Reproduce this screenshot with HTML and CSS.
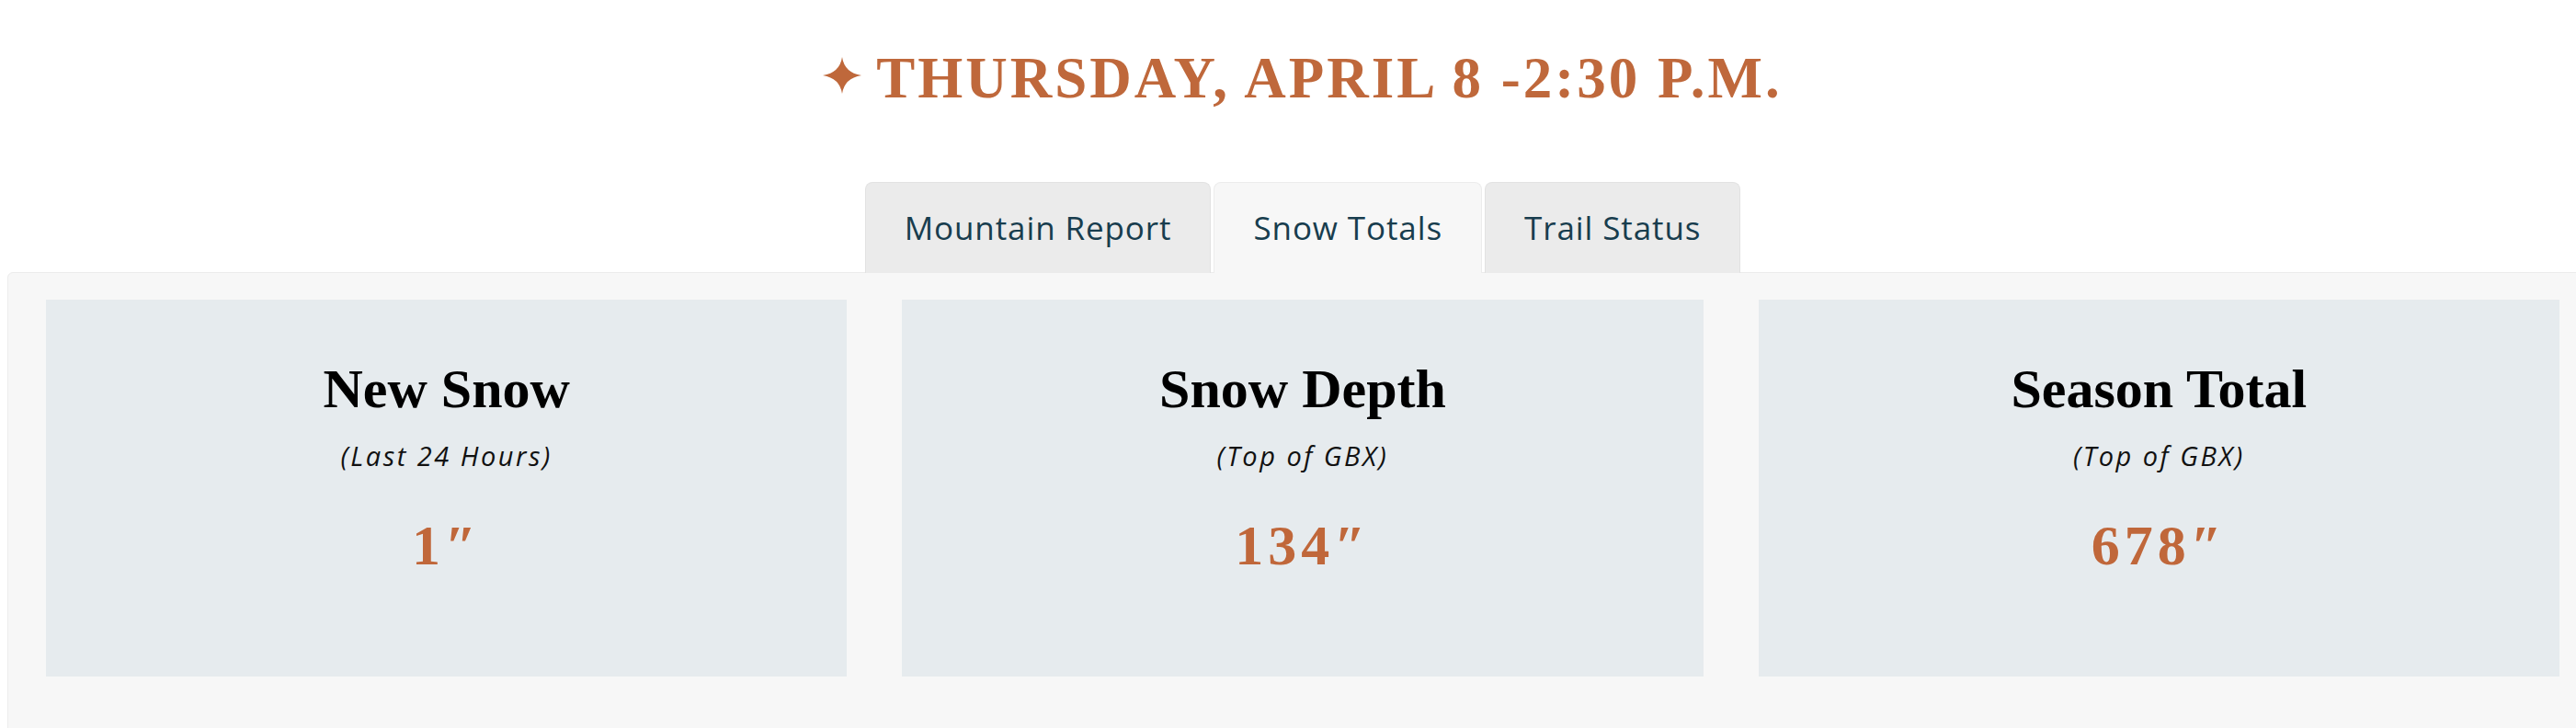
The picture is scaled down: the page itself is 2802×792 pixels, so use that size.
FILE: index.html
```html
<!DOCTYPE html>
<html lang="en">
  <head>
    <meta charset="UTF-8" />
    <title>Snow Report</title>
    <link rel="stylesheet" href="styles.css">
  </head>
  <body>
    <div class="report">
      <h1 class="report-date">
        <svg class="spark" width="42" height="40" viewBox="0 0 42 40" aria-hidden="true">
          <path d="M21 0 Q23.5 17 42 20 Q23.5 23 21 40 Q18.5 23 0 20 Q18.5 17 21 0 Z" fill="#bf683b" />
        </svg>
        <span>THURSDAY, APRIL 8 -2:30 P.M.</span>
      </h1>

      <div class="tabs">
        <div class="tab">Mountain Report</div>
        <div class="tab active">Snow Totals</div>
        <div class="tab">Trail Status</div>
      </div>

      <div class="panel">
        <div class="card">
          <h2>New Snow</h2>
          <p class="note">(Last 24 Hours)</p>
          <p class="amount">1″</p>
        </div>
        <div class="card">
          <h2>Snow Depth</h2>
          <p class="note">(Top of GBX)</p>
          <p class="amount">134″</p>
        </div>
        <div class="card">
          <h2>Season Total</h2>
          <p class="note">(Top of GBX)</p>
          <p class="amount">678″</p>
        </div>
      </div>
    </div>
  </body>
</html>
```

FILE: styles.css
```css
html,
body {
  margin: 0;
  overflow-x: hidden;
  background: #fff;
}

.report {
  width: 2818px;
  margin-left: 8px;
}

.report-date {
  display: flex;
  justify-content: center;
  align-items: center;
  gap: 16px;
  margin: 54px 0 82px;
  font-family: "Liberation Serif", serif;
  font-size: 63px;
  line-height: 62px;
  font-weight: bold;
  letter-spacing: 3px;
  color: #bf683b;
}

.spark {
  flex: none;
  margin-bottom: 6px;
}

.tabs {
  display: flex;
  justify-content: center;
  gap: 3px;
  margin-bottom: -1px;
}

.tab {
  position: relative;
  padding: 29px 42px;
  line-height: 40px;
  font-family: "Open Sans", sans-serif;
  font-size: 35px;
  letter-spacing: 0.9px;
  color: #183d4e;
  background: #ebebeb;
  border: 1px solid #e2e2e2;
  border-bottom: none;
  border-radius: 8px 8px 0 0;
}

.tab.active {
  background: #f7f7f7;
  border-color: #ececec;
  z-index: 1;
}

.panel {
  display: grid;
  grid-template-columns: repeat(3, 1fr);
  gap: 60px;
  padding: 29px 41px 60px;
  background: #f7f7f7;
  border: 1px solid #ececec;
  border-radius: 6px 6px 0 0;
}

.card {
  height: 410px;
  padding-top: 67px;
  box-sizing: border-box;
  background: #e6ebee;
  text-align: center;
}

.card h2 {
  margin: 0 0 28px;
  font-family: "Liberation Serif", serif;
  font-size: 60px;
  line-height: 60px;
  font-weight: bold;
  color: #000;
}

.note {
  margin: 0 0 52px;
  font-family: "Open Sans", sans-serif;
  font-style: italic;
  font-size: 29px;
  line-height: 30px;
  letter-spacing: 2.5px;
  color: #111;
}

.amount {
  margin: 0;
  font-family: "Liberation Serif", serif;
  font-size: 62px;
  line-height: 60px;
  font-weight: bold;
  letter-spacing: 5px;
  color: #c0673a;
}
```
